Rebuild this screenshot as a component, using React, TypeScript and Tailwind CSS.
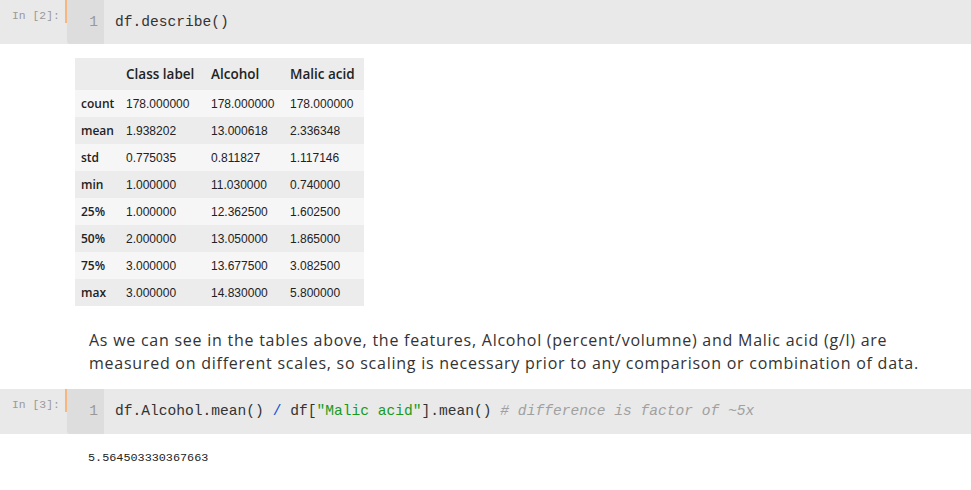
import React from 'react';

const mono = { fontFamily: '"Liberation Mono", "DejaVu Sans Mono", monospace' };
const openSans = { fontFamily: '"Open Sans", "Liberation Sans", sans-serif' };

const rows: [string, string, string, string][] = [
  ['count', '178.000000', '178.000000', '178.000000'],
  ['mean', '1.938202', '13.000618', '2.336348'],
  ['std', '0.775035', '0.811827', '1.117146'],
  ['min', '1.000000', '11.030000', '0.740000'],
  ['25%', '1.000000', '12.362500', '1.602500'],
  ['50%', '2.000000', '13.050000', '1.865000'],
  ['75%', '3.000000', '13.677500', '3.082500'],
  ['max', '3.000000', '14.830000', '5.800000'],
];

const CodeCell: React.FC<{ n: number; children: React.ReactNode; height: string }> = ({ n, children, height }) => (
  <div className={`flex bg-[#e9e9e9] ${height}`}>
    <div className="w-[65px] shrink-0 pl-[12px] pt-[8px] text-[11.4px] text-[#9a9a9a]" style={mono}>
      In [{n}]:
    </div>
    <div className="w-[2px] h-[23px] bg-[#f5b77d] shrink-0" />
    <div className="w-[37px] shrink-0 bg-[#dddddd] rounded-bl-[3px] flex justify-end pr-[6px] pt-[13px] text-[14.6px] leading-[18px] text-[#999]" style={mono}>
      1
    </div>
    <div className="pl-[11px] pt-[13px] text-[14.6px] leading-[18px] text-[#333] whitespace-pre" style={mono}>
      {children}
    </div>
  </div>
);

export default function App() {
  return (
    <div className="w-[971px] h-[490px] bg-white overflow-hidden" style={{ fontFamily: '"Liberation Sans", Arial, sans-serif' }}>
      <CodeCell n={2} height="h-[44px]">df.describe()</CodeCell>

      <div className="pl-[75px] pt-[14px]">
        <table className="border-collapse text-[12px] text-[#222]">
          <thead>
            <tr className="bg-[#ececec] h-[32px]">
              <th className="w-[45px]" />
              <th className="w-[85px] text-left pl-[6px] font-semibold text-[13.5px]" style={openSans}>Class label</th>
              <th className="w-[79px] text-left pl-[6px] font-semibold text-[13.5px]" style={openSans}>Alcohol</th>
              <th className="w-[80px] text-left pl-[6px] font-semibold text-[13.5px]" style={openSans}>Malic acid</th>
            </tr>
          </thead>
          <tbody>
            {rows.map((r, i) => (
              <tr key={r[0]} className={`h-[27px] ${i % 2 === 0 ? 'bg-[#f6f6f6]' : 'bg-[#ececec]'}`}>
                <th className="text-left pl-[6px] font-semibold" style={openSans}>{r[0]}</th>
                <td className="pl-[6px]">{r[1]}</td>
                <td className="pl-[6px]">{r[2]}</td>
                <td className="pl-[6px]">{r[3]}</td>
              </tr>
            ))}
          </tbody>
        </table>
      </div>

      <p className="pl-[89px] pt-[23px] text-[16px] leading-[23px] tracking-[0.75px] text-[#333] whitespace-nowrap" style={openSans}>
        As we can see in the tables above, the features, Alcohol (percent/volumne) and Malic acid (g/l) are
        <br />
        measured on different scales, so scaling is necessary prior to any comparison or combination of data.
      </p>

      <div className="mt-[14px]">
        <CodeCell n={3} height="h-[45px]">
          df.Alcohol.mean() <span className="text-[#2050d0]">/</span> df[<span className="text-[#1a9a1a]">"Malic acid"</span>].mean() <span className="italic text-[#a0a0a0]"># difference is factor of ~5x</span>
        </CodeCell>
      </div>

      <div className="pl-[88px] pt-[16px] text-[11.8px] text-[#222]" style={mono}>
        5.564503330367663
      </div>
    </div>
  );
}
